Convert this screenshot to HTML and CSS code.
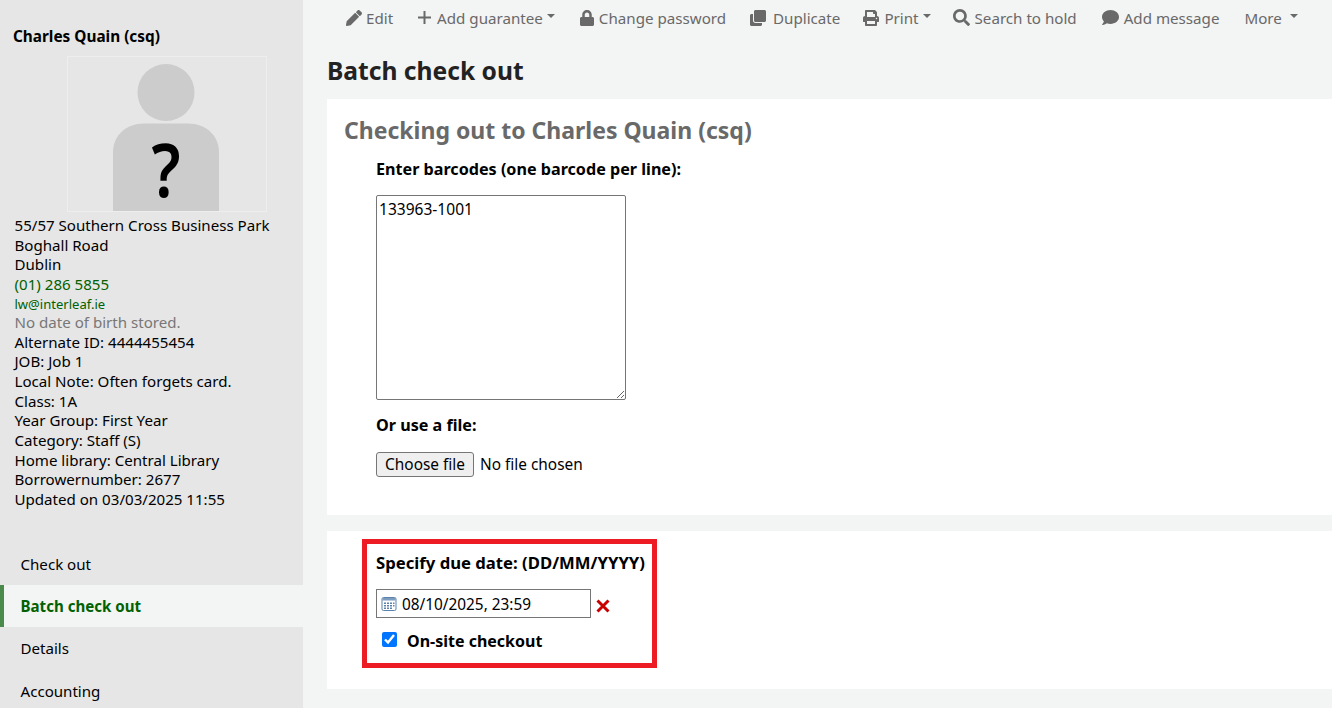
FILE: index.html
```html
<!DOCTYPE html>
<html lang="en">
<head>
<meta charset="utf-8">
<title>Batch check out</title>
<link rel="stylesheet" href="styles.css">
</head>
<body>
<div class="page">
  <aside class="sidebar">
    <h5 class="patron-name">Charles Quain (csq)</h5>
    <div class="photo">
      <svg class="photo-svg" viewBox="0 0 198 153" width="198" height="154">
        <circle cx="98" cy="35" r="28.5" fill="#cccccc"/>
        <path d="M45 154V95c0-17 13-29 31-29h44c18 0 31 12 31 29v59z" fill="#cccccc"/>
      </svg>
      <span class="photo-q">?</span>
    </div>
    <ul class="patron-info">
      <li>55/57 Southern Cross Business Park</li>
      <li>Boghall Road</li>
      <li>Dublin</li>
      <li><a href="#">(01) 286 5855</a></li>
      <li class="email"><a href="#">lw@interleaf.ie</a></li>
      <li class="muted">No date of birth stored.</li>
      <li>Alternate ID: 4444455454</li>
      <li>JOB: Job 1</li>
      <li>Local Note: Often forgets card.</li>
      <li>Class: 1A</li>
      <li>Year Group: First Year</li>
      <li>Category: Staff (S)</li>
      <li>Home library: Central Library</li>
      <li>Borrowernumber: 2677</li>
      <li>Updated on 03/03/2025 11:55</li>
    </ul>
    <nav class="side-nav">
      <a href="#">Check out</a>
      <a href="#" class="active">Batch check out</a>
      <a href="#">Details</a>
      <a href="#">Accounting</a>
    </nav>
  </aside>
  <main class="main">
    <div class="toolbar">
      <a href="#" class="tool t-edit"><svg class="ico" viewBox="0 0 512 512"><path d="M497.9 142.1l-46.1 46.1c-4.7 4.7-12.3 4.7-17 0l-111-111c-4.7-4.7-4.7-12.3 0-17l46.1-46.1c18.7-18.7 49.1-18.7 67.9 0l60.1 60.1c18.8 18.7 18.8 49.1 0 67.9zM284.2 99.8L21.6 362.4.4 483.9c-2.9 16.4 11.4 30.6 27.8 27.8l121.5-21.3 262.6-262.6c4.7-4.7 4.7-12.3 0-17l-111-111c-4.8-4.7-12.4-4.7-17.1 0z"/></svg>Edit</a>
      <a href="#" class="tool t-guar"><svg class="ico ico-plus" viewBox="0 0 13 13"><path d="M5.5 0h2v5.5H13v2H7.5V13h-2V7.5H0v-2h5.5z"/></svg>Add guarantee<span class="caret"></span></a>
      <a href="#" class="tool t-lock"><svg class="ico ico-lock" viewBox="0 0 448 512"><path d="M400 224h-24v-72C376 68.2 307.8 0 224 0S72 68.2 72 152v72H48c-26.5 0-48 21.5-48 48v192c0 26.5 21.5 48 48 48h352c26.5 0 48-21.5 48-48V272c0-26.5-21.5-48-48-48zm-104 0H152v-72c0-39.7 32.3-72 72-72s72 32.3 72 72v72z"/></svg>Change password</a>
      <a href="#" class="tool t-dup"><svg class="ico ico-dup" viewBox="0 0 512 512"><path d="M464 0c26.51 0 48 21.49 48 48v288c0 26.51-21.49 48-48 48H176c-26.51 0-48-21.49-48-48V48c0-26.51 21.49-48 48-48h288M176 416c-44.112 0-80-35.888-80-80V128H48c-26.51 0-48 21.49-48 48v288c0 26.51 21.49 48 48 48h288c26.51 0 48-21.49 48-48v-48H176z"/></svg>Duplicate</a>
      <a href="#" class="tool t-print"><svg class="ico ico-print" viewBox="0 0 512 512"><path d="M448 192V77.25c0-8.49-3.37-16.62-9.37-22.63L393.37 9.37c-6-6-14.14-9.37-22.63-9.37H96C78.33 0 64 14.33 64 32v160c-35.35 0-64 28.65-64 64v112c0 8.84 7.16 16 16 16h48v96c0 17.67 14.33 32 32 32h320c17.67 0 32-14.33 32-32v-96h48c8.84 0 16-7.16 16-16V256c0-35.35-28.65-64-64-64zm-64 256H128v-96h256v96zm0-224H128V64h192v48c0 8.84 7.16 16 16 16h48v96zm48 72c-13.25 0-24-10.75-24-24 0-13.26 10.75-24 24-24s24 10.74 24 24c0 13.25-10.75 24-24 24z"/></svg>Print<span class="caret"></span></a>
      <a href="#" class="tool t-search"><svg class="ico ico-big" viewBox="0 0 512 512"><path d="M505 442.7L405.3 343c-4.5-4.5-10.6-7-17-7H372c27.6-35.3 44-79.7 44-128C416 93.1 322.9 0 208 0S0 93.1 0 208s93.1 208 208 208c48.3 0 92.7-16.4 128-44v16.3c0 6.4 2.5 12.5 7 17l99.7 99.7c9.4 9.4 24.6 9.4 33.9 0l28.3-28.3c9.4-9.4 9.4-24.6.1-34zM208 336c-70.7 0-128-57.2-128-128 0-70.7 57.2-128 128-128 70.7 0 128 57.2 128 128 0 70.7-57.2 128-128 128z"/></svg>Search to hold</a>
      <a href="#" class="tool t-msg"><svg class="ico ico-big" viewBox="0 0 512 512"><path d="M256 32C114.6 32 0 125.1 0 240c0 49.6 21.4 95 57 130.7C44.5 421.1 2.7 466 2.2 466.5c-2.2 2.3-2.8 5.7-1.5 8.7S4.8 480 8 480c66.3 0 116-31.8 140.6-51.4 32.7 12.3 69 19.4 107.4 19.4 141.4 0 256-93.1 256-208S397.4 32 256 32z"/></svg>Add message</a>
      <a href="#" class="tool t-more">More<span class="caret caret-wide"></span></a>
    </div>
    <h1 class="page-title">Batch check out</h1>
    <section class="panel panel-top">
      <h2 class="panel-title">Checking out to Charles Quain (csq)</h2>
      <div class="field-group">
        <label class="lbl lbl-barcodes" for="bc">Enter barcodes (one barcode per line):</label>
        <textarea id="bc" class="barcodes">133963-1001</textarea>
        <label class="lbl lbl-file">Or use a file:</label>
        <div class="file-row">
          <button type="button" class="file-btn">Choose file</button>
          <span class="file-name">No file chosen</span>
        </div>
      </div>
    </section>
    <section class="panel panel-bottom">
      <div class="highlight">
        <label class="lbl lbl-due" for="due">Specify due date: (DD/MM/YYYY)</label>
        <div class="due-row">
          <div class="due-input">
            <svg class="cal" viewBox="0 0 16 16" width="16" height="16">
              <rect x="1" y="1.5" width="14" height="13" rx="1.5" fill="#fff" stroke="#5b82ad"/>
              <rect x="1.5" y="2" width="13" height="2.5" fill="#7c9cc0"/>
              <path d="M3 6.5h2v1.5H3zM6 6.5h2v1.5H6zM9 6.5h2v1.5H9zM12 6.5h1.5v1.5H12zM3 9h2v1.5H3zM6 9h2v1.5H6zM9 9h2v1.5H9zM12 9h1.5v1.5H12zM3 11.5h2V13H3zM6 11.5h2V13H6zM9 11.5h2V13H9z" fill="#5b82ad"/>
            </svg>
            <input id="due" class="due-text" type="text" value="08/10/2025, 23:59">
          </div>
          <svg class="clear" viewBox="0 0 14 14" width="14" height="14"><path d="M1.5 1.5l11 11M12.5 1.5l-11 11" stroke="#c80000" stroke-width="3" fill="none"/></svg>
        </div>
        <div class="onsite">
          <input id="os" class="check" type="checkbox" checked>
          <label class="lbl-onsite" for="os">On-site checkout</label>
        </div>
      </div>
    </section>
  </main>
</div>
</body>
</html>
```
FILE: styles.css
```css
* { box-sizing: border-box; }
html, body { margin: 0; height: 708px; overflow: hidden; }
body { font-family: "Noto Sans", sans-serif; font-size: 15.1px; color: #000; background: #f3f4f4; }
a { text-decoration: none; color: inherit; }
.page { display: flex; height: 708px; overflow: hidden; }

.sidebar { width: 303px; flex: none; background: #e6e6e6; height: 708px; overflow: hidden; }
.patron-name { margin: 0; padding: 26.5px 0 0 13px; font-size: 15.35px; line-height: 19px; font-weight: 700; }
.photo { position: relative; width: 200px; height: 156px; margin: 10.5px 0 0 67px; border: 1px solid #eeeeee; }
.photo-svg { display: block; }
.photo-q { position: absolute; left: 0; top: 76px; width: 196px; text-align: center; font-size: 74px; line-height: 72px; font-weight: 600; color: #000; transform: scaleX(0.85); }
.patron-info { list-style: none; margin: 4px 0 0 14.5px; padding: 0; line-height: 19.7px; }
.patron-info a { color: #006100; }
.patron-info .email { font-size: 13.05px; line-height: 18px; }
.patron-info .muted { color: #777777; }
.side-nav { display: flex; flex-direction: column; margin-top: 33px; }
.side-nav a { height: 42.3px; padding: 11px 0 0 20.5px; line-height: 20px; }
.side-nav a.active { background: #f3f4f4; border-left: 4px solid #4a8a4a; padding-left: 16.5px; color: #006100; font-weight: 700; }

.main { flex: 1; min-width: 0; padding-left: 24px; }
.toolbar { display: flex; height: 35px; align-items: center; color: #696969; font-size: 15.15px; padding-left: 19px; }
.tool { display: flex; align-items: center; white-space: nowrap; }
.ico { width: 16px; height: 16px; margin-right: 4px; fill: #696969; flex: none; }
.ico-plus { width: 13px; height: 13px; margin-right: 6px; }
.ico-lock { width: 14px; margin-right: 5px; }
.ico-dup { margin-right: 7px; }
.ico-print { margin-right: 5px; }
.ico-big { width: 17px; height: 17px; margin-right: 5px; }
.caret { display: inline-block; width: 0; height: 0; margin-left: 4px; margin-bottom: 3px; border-left: 4px solid transparent; border-right: 4px solid transparent; border-top: 4px solid #696969; }
.caret-wide { margin-left: 8px; }
.t-guar { margin-left: 25px; }
.t-lock { margin-left: 25px; }
.t-dup { margin-left: 24px; }
.t-print { margin-left: 23px; }
.t-search { margin-left: 22px; }
.t-msg { margin-left: 25px; }
.t-more { margin-left: 25px; }

.page-title { margin: 19px 0 0; font-size: 24.6px; line-height: 34px; font-weight: 700; color: #222; }
.panel { background: #fff; }
.panel-top { margin-top: 11px; height: 416px; padding: 16px 0 0 17px; }
.panel-title { margin: 0; font-size: 23px; line-height: 30px; font-weight: 700; color: #696969; }
.field-group { display: flex; flex-direction: column; align-items: flex-start; padding-left: 32px; }
.lbl { font-weight: 700; font-size: 16.15px; line-height: 20px; }
.lbl-barcodes { margin-top: 14px; }
.barcodes { width: 250px; height: 205px; margin-top: 16px; padding: 3px 2px; border: 1px solid #767676; border-radius: 2px; font-family: inherit; font-size: 15.55px; line-height: 20px; color: #000; outline: none; }
.lbl-file { margin-top: 15px; }
.file-row { display: flex; align-items: center; margin-top: 17px; font-size: 15.4px; }
.file-btn { width: 98px; height: 25px; padding: 0; background: #efefef; border: 1px solid #767676; border-radius: 3px; font-family: inherit; font-size: 15.4px; line-height: 20px; color: #000; }
.file-name { margin-left: 6px; }

.panel-bottom { margin-top: 16px; height: 158px; padding: 8px 0 0 35px; }
.highlight { width: 295px; height: 129px; border: 5px solid #ed1c24; padding: 9px 0 0 9px; }
.highlight .lbl { display: block; }
.highlight .lbl-due { font-size: 16.7px; white-space: nowrap; }
.due-row { display: flex; align-items: center; margin-top: 16px; gap: 5px; }
.due-input { display: flex; align-items: center; width: 215px; height: 29px; border: 1px solid #767676; padding-left: 4px; background: #fff; }
.cal { flex: none; }
.due-text { flex: 1; min-width: 0; border: 0; outline: none; padding: 0 0 0 5px; font-family: inherit; font-size: 15.35px; color: #000; background: transparent; }
.clear { flex: none; margin-top: 4px; }
.onsite { display: flex; align-items: flex-start; margin-top: 14px; padding-left: 6px; }
.check { width: 15px; height: 15px; margin: 0; }
.lbl-onsite { margin: -2px 0 0 10px; font-weight: 700; font-size: 16px; line-height: 22px; }
```
